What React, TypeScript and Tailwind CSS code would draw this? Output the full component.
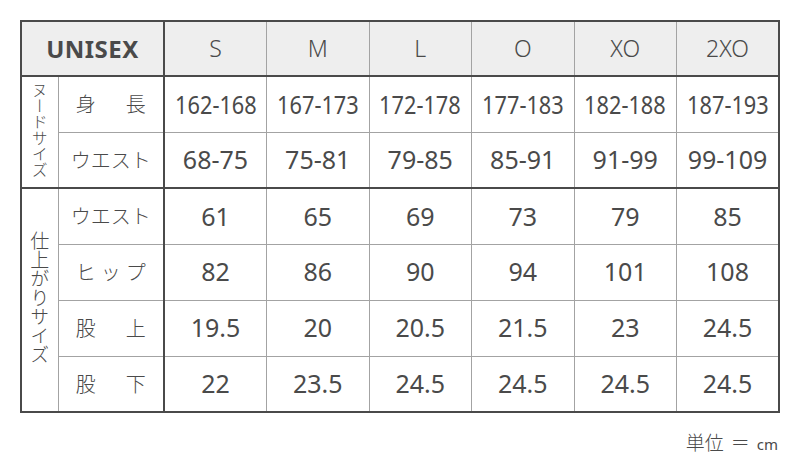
const SIZES = ["S", "M", "L", "O", "XO", "2XO"];

type Row = { label: string[]; values: string[]; narrow?: boolean };

const NUDE: Row[] = [
  { label: ["身", "長"], narrow: true, values: ["162-168", "167-173", "172-178", "177-183", "182-188", "187-193"] },
  { label: ["ウエスト"], values: ["68-75", "75-81", "79-85", "85-91", "91-99", "99-109"] },
];

const FINISHED: Row[] = [
  { label: ["ウエスト"], values: ["61", "65", "69", "73", "79", "85"] },
  { label: ["ヒ", "ッ", "プ"], values: ["82", "86", "90", "94", "101", "108"] },
  { label: ["股", "上"], values: ["19.5", "20", "20.5", "21.5", "23", "24.5"] },
  { label: ["股", "下"], values: ["22", "23.5", "24.5", "24.5", "24.5", "24.5"] },
];

const jp = { fontFamily: '"Noto Sans CJK JP", "Noto Sans", sans-serif' };
const num = { fontFamily: '"Noto Sans", "Noto Sans CJK JP", sans-serif' };

function Label({ parts }: { parts: string[] }) {
  if (parts.length === 1) {
    return <span className="text-[20px] font-light">{parts[0]}</span>;
  }
  return (
    <div className="mx-auto flex w-[70px] justify-between text-[20px] font-light">
      {parts.map((p, i) => (
        <span key={i}>{p}</span>
      ))}
    </div>
  );
}

function BodyRow({
  row,
  group,
  lastInGroup,
}: {
  row: Row;
  group?: { text: string; span: number; size: string };
  lastInGroup: boolean;
}) {
  const bottom = lastInGroup ? "border-b-2 border-b-[#4a4a4a]" : "border-b border-b-[#a3a3a3]";
  return (
    <tr className="h-[56px]">
      {group && (
        <td
          rowSpan={group.span}
          className="border-r border-r-[#a3a3a3] border-b-2 border-b-[#4a4a4a] p-0 text-center align-middle"
          style={jp}
        >
          <span className={`inline-block ${group.size} font-light leading-none [writing-mode:vertical-rl]`}>
            {group.text}
          </span>
        </td>
      )}
      <td className={`${bottom} border-r-2 border-r-[#4a4a4a] p-0 text-center`} style={jp}>
        <Label parts={row.label} />
      </td>
      {row.values.map((v, i) => (
        <td
          key={i}
          className={`${bottom} ${i < 5 ? "border-r border-r-[#a3a3a3]" : ""} p-0 text-center text-[25px]`}
          style={num}
        >
          <span className={`inline-block ${row.narrow ? "scale-x-[0.87]" : ""}`}>{v}</span>
        </td>
      ))}
    </tr>
  );
}

export default function App() {
  return (
    <div className="h-[460px] w-[800px] bg-white px-[20px] pt-[20px] text-[#4a4a4a]">
      <table className="w-[760px] table-fixed border-collapse border-2 border-[#4a4a4a]">
        <colgroup>
          <col className="w-[37px]" />
          <col className="w-[106px]" />
          {SIZES.map((s) => (
            <col key={s} />
          ))}
        </colgroup>
        <thead>
          <tr className="h-[55px] bg-[#eeeeee]">
            <th
              colSpan={2}
              className="border-b-2 border-r-2 border-[#4a4a4a] p-0 text-center text-[24px] font-bold tracking-[0.5px]"
              style={num}
            >
              UNISEX
            </th>
            {SIZES.map((s, i) => (
              <th
                key={s}
                className={`border-b-2 border-b-[#4a4a4a] ${i < 5 ? "border-r border-r-[#a3a3a3]" : ""} p-0 text-center text-[23px] font-light`}
                style={num}
              >
                {s}
              </th>
            ))}
          </tr>
        </thead>
        <tbody>
          {NUDE.map((row, i) => (
            <BodyRow
              key={"n" + i}
              row={row}
              lastInGroup={i === NUDE.length - 1}
              group={i === 0 ? { text: "ヌードサイズ", span: NUDE.length, size: "text-[16px]" } : undefined}
            />
          ))}
          {FINISHED.map((row, i) => (
            <BodyRow
              key={"f" + i}
              row={row}
              lastInGroup={i === FINISHED.length - 1}
              group={i === 0 ? { text: "仕上がりサイズ", span: FINISHED.length, size: "text-[19px]" } : undefined}
            />
          ))}
        </tbody>
      </table>
      <div className="mt-[15px] flex items-baseline justify-end gap-[7px] pr-[2px] text-[#4a4a4a]" style={jp}>
        <span className="text-[19px] font-light">単位</span>
        <span className="text-[19px] font-light">＝</span>
        <span className="text-[15px]" style={num}>
          cm
        </span>
      </div>
    </div>
  );
}
